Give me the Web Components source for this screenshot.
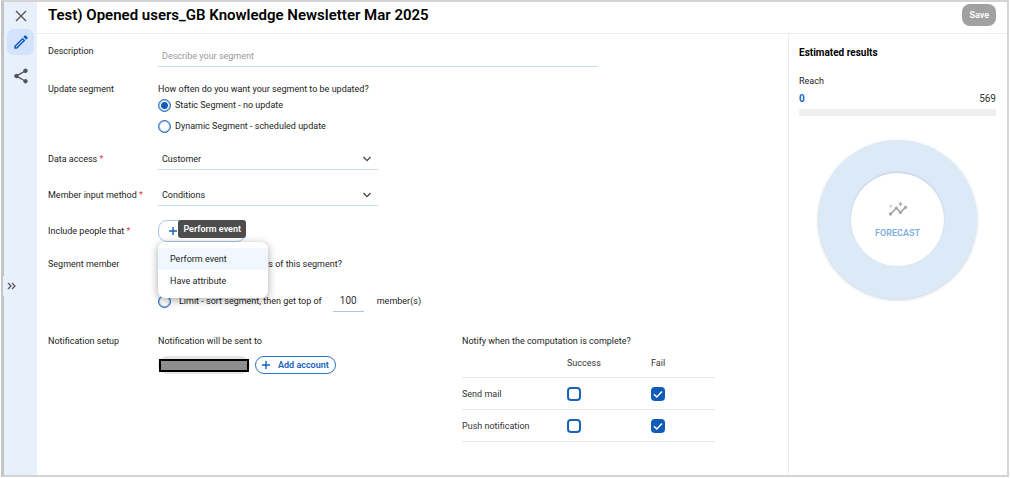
<!DOCTYPE html>
<html lang="en">
<head>
<meta charset="utf-8">
<meta name="viewport" content="width=device-width, initial-scale=1">
<title>Edit segment</title>
<style>
    html, body {
        margin: 0;
        background: #fff;
    }
    body {
        font-family: Roboto, "Liberation Sans", sans-serif;
        font-size: 9px;
        line-height: 16px;
        color: #1c1c1c;
    }
</style>
</head>
<body>
<segment-app></segment-app>

<script>
class SideRail extends HTMLElement {
    connectedCallback() {
        this.attachShadow({ mode: 'open' });
        this.shadowRoot.innerHTML = `
            <style>
                :host {
                    display: block;
                    position: relative;
                    background-color: #e8f0fb;
                    padding: 1px 3px;
                    color: #555;
                }

                button {
                    display: flex;
                    align-items: center;
                    justify-content: center;
                    width: 27px;
                    height: 26px;
                    padding: 0;
                    border: 0;
                    border-radius: 7px;
                    background: none;
                    color: inherit;
                    cursor: pointer;
                }

                nav {
                    display: flex;
                    flex-direction: column;
                    gap: 8px;
                }

                nav .active {
                    background-color: #d3e3fd;
                    color: #0f5cb8;
                }

                svg {
                    fill: currentColor;
                }

                /* handle sits on the edge of the rail */
                .expand {
                    position: absolute;
                    top: 58%;
                    left: -1px;
                    width: 16px;
                    height: 20px;
                    border-radius: 0;
                    background-color: #e8f0fb;
                }

                .expand svg, .close svg {
                    fill: none;
                    stroke: currentColor;
                }
            </style>
            <button class="close" aria-label="Close">
                <svg width="12" height="12" viewBox="0 0 12 12" stroke-width="1.4"><path d="M1 1l10 10M11 1L1 11"/></svg>
            </button>
            <nav>
                <button class="active" aria-label="Edit">
                    <svg width="18" height="18" viewBox="0 0 24 24"><path d="M14.06 9.02l.92.92L5.92 19H5v-.92l9.06-9.06M17.66 3c-.25 0-.51.1-.7.29l-1.83 1.83 3.75 3.75 1.83-1.83c.39-.39.39-1.02 0-1.41l-2.34-2.34c-.2-.2-.45-.29-.71-.29zm-3.6 3.19L3 17.25V21h3.75L17.81 9.94l-3.75-3.75z"/></svg>
                </button>
                <button aria-label="Share">
                    <svg width="18" height="18" viewBox="0 0 24 24"><path d="M18 16.08c-.76 0-1.44.3-1.96.77L8.91 12.7c.05-.23.09-.46.09-.7s-.04-.47-.09-.7l7.05-4.11c.54.5 1.25.81 2.04.81 1.66 0 3-1.34 3-3s-1.34-3-3-3-3 1.34-3 3c0 .24.04.47.09.7L8.04 9.81C7.5 9.31 6.79 9 6 9c-1.66 0-3 1.34-3 3s1.34 3 3 3c.79 0 1.5-.31 2.04-.81l7.12 4.16c-.05.21-.08.43-.08.65 0 1.61 1.31 2.92 2.92 2.92s2.92-1.31 2.92-2.92-1.31-2.92-2.92-2.92z"/></svg>
                </button>
            </nav>
            <button class="expand" aria-label="Expand">
                <svg width="9" height="8" viewBox="0 0 9 8" stroke-width="1.3"><path d="M1 1l3 3-3 3M5 1l3 3-3 3"/></svg>
            </button>
        `;
    }
}

class PageHeader extends HTMLElement {
    connectedCallback() {
        this.attachShadow({ mode: 'open' });
        this.shadowRoot.innerHTML = `
            <style>
                :host {
                    display: flex;
                    align-items: center;
                    justify-content: space-between;
                    padding: 2px 11px 7px;
                    border-bottom: 1px solid #ececec;
                }

                h1 {
                    margin: 0;
                    font-size: 15px;
                    line-height: 22px;
                    font-weight: 600;
                    color: #000;
                }

                button {
                    height: 22px;
                    padding: 0 7px;
                    border: 0;
                    border-radius: 8px;
                    background-color: #a1a1a1;
                    color: #fff;
                    font: inherit;
                    font-weight: 600;
                }
            </style>
            <h1><slot></slot></h1>
            <button disabled>Save</button>
        `;
    }
}

class FormRow extends HTMLElement {
    connectedCallback() {
        this.attachShadow({ mode: 'open' });
        this.shadowRoot.innerHTML = `
            <style>
                :host {
                    display: grid;
                    grid-template-columns: 110px minmax(0, 1fr);
                }

                :host([middle]) {
                    align-items: center;
                }

                .req {
                    display: none;
                    color: #e53e30;
                }

                :host([required]) .req {
                    display: inline;
                }
            </style>
            <div><slot name="label"></slot><span class="req"> *</span></div>
            <div><slot></slot></div>
        `;
    }
}

class SelectField extends HTMLElement {
    connectedCallback() {
        this.attachShadow({ mode: 'open' });
        this.shadowRoot.innerHTML = `
            <style>
                :host {
                    display: grid;
                    grid-template-columns: 1fr 16px;
                    align-items: center;
                    max-width: 220px;
                    border-bottom: 1px solid #c5dbef;
                }

                ::slotted(select) {
                    grid-area: 1 / 1 / 2 / 3;
                    height: 21px;
                    padding: 0 4px;
                    border: 0;
                    background: none;
                    appearance: none;
                    font: inherit;
                    color: inherit;
                }

                svg {
                    grid-area: 1 / 2;
                    fill: none;
                    stroke: #444;
                    pointer-events: none;
                }
            </style>
            <slot></slot>
            <svg width="10" height="8" viewBox="0 0 10 8" stroke-width="1.3"><path d="M1.5 2l3.5 3.6L8.5 2"/></svg>
        `;
    }
}

class PillButton extends HTMLElement {
    connectedCallback() {
        this.attachShadow({ mode: 'open' });
        this.shadowRoot.innerHTML = `
            <style>
                :host {
                    display: block;
                }

                button {
                    display: flex;
                    align-items: center;
                    gap: 8px;
                    box-sizing: border-box;
                    width: 100%;
                    height: 18px;
                    padding: 0 6px;
                    border: 1px solid #2f74c4;
                    border-radius: 9px;
                    background-color: #fff;
                    color: #1560bd;
                    font: inherit;
                    font-weight: 600;
                }

                :host([large]) button {
                    height: 22px;
                    padding: 0 10px;
                    border-color: #a9c8e6;
                }

                svg {
                    fill: none;
                    stroke: currentColor;
                }
            </style>
            <button aria-label="${this.getAttribute('label')}">
                <svg width="8" height="8" viewBox="0 0 8 8" stroke-width="1.4"><path d="M4 0v8M0 4h8"/></svg>
                <slot></slot>
            </button>
        `;
    }
}

class ConditionMenu extends HTMLElement {
    connectedCallback() {
        this.attachShadow({ mode: 'open' });
        this.shadowRoot.innerHTML = `
            <style>
                :host {
                    display: block;
                    position: relative;
                    width: 88px;
                }

                .tooltip {
                    position: absolute;
                    z-index: 3;
                    top: 0;
                    right: 0;
                    padding: 1px 5px;
                    border-radius: 3px;
                    background-color: #4d4d4d;
                    color: #fff;
                    font-weight: 600;
                    white-space: nowrap;
                }

                .menu {
                    position: absolute;
                    z-index: 2;
                    top: 100%;
                    left: 0;
                    width: 110px;
                    padding: 6px 0;
                    border-radius: 7px;
                    background-color: #fff;
                    box-shadow: 0 2px 8px rgba(0, 0, 0, 0.35);
                }

                .menu button {
                    display: block;
                    width: 100%;
                    height: 22px;
                    padding: 0 12px;
                    border: 0;
                    background: none;
                    color: inherit;
                    font: inherit;
                    text-align: left;
                }

                .menu .hover {
                    background-color: #f0f7fe;
                }
            </style>
            <pill-button large label="Add condition"></pill-button>
            <div class="tooltip" role="tooltip">Perform event</div>
            <div class="menu" role="menu">
                <button class="hover" role="menuitem">Perform event</button>
                <button role="menuitem">Have attribute</button>
            </div>
        `;
    }
}

class NotifyTable extends HTMLElement {
    connectedCallback() {
        this.attachShadow({ mode: 'open' });
        const rows = ['Send mail', 'Push notification'];
        this.shadowRoot.innerHTML = `
            <style>
                :host {
                    display: block;
                }

                table {
                    width: 100%;
                    table-layout: fixed;
                    border-collapse: collapse;
                    color: #333;
                }

                th {
                    height: 28px;
                    font-weight: 400;
                    text-align: left;
                }

                th, td {
                    padding: 0;
                    border-bottom: 1px solid #e6e6e6;
                }

                tbody th {
                    height: 31px;
                }

                .name {
                    width: 105px;
                }

                .success {
                    width: 84px;
                }

                input {
                    display: block;
                    width: 14px;
                    height: 14px;
                    margin: 0;
                    box-sizing: border-box;
                    appearance: none;
                    border: 2px solid #1a62b8;
                    border-radius: 4px;
                    background-color: #fff;
                }

                input:checked {
                    border: 0;
                    background: #0f5cb8 url("data:image/svg+xml,%3Csvg xmlns='http://www.w3.org/2000/svg' viewBox='0 0 14 14'%3E%3Cpath d='M3 7.2l2.8 2.8 5.2-5.400' fill='none' stroke='white' stroke-width='1.500'/%3E%3C/svg%3E") center / 14px 14px no-repeat;
                }
            </style>
            <table>
                <thead>
                    <tr><th class="name"></th><th class="success">Success</th><th>Fail</th></tr>
                </thead>
                <tbody>
                    ${rows.map(name => `
                        <tr>
                            <th scope="row">${name}</th>
                            <td><input type="checkbox" aria-label="${name} on success"></td>
                            <td><input type="checkbox" aria-label="${name} on fail" checked></td>
                        </tr>
                    `).join('')}
                </tbody>
            </table>
        `;
    }
}

class SegmentForm extends HTMLElement {
    connectedCallback() {
        this.attachShadow({ mode: 'open' });
        this.shadowRoot.innerHTML = `
            <style>
                :host {
                    display: flex;
                    flex-direction: column;
                    gap: 14px;
                    padding: 9px 11px;
                }

                .description {
                    display: block;
                    box-sizing: border-box;
                    width: 100%;
                    max-width: 440px;
                    height: 24px;
                    padding: 3px 4px 0;
                    border: 0;
                    border-bottom: 1px solid #c5dbef;
                    font: inherit;
                }

                .description::placeholder {
                    color: #999;
                }

                .options {
                    display: flex;
                    flex-direction: column;
                    gap: 5px;
                }

                .option {
                    display: flex;
                    align-items: center;
                }

                .option label {
                    display: flex;
                    align-items: center;
                    gap: 4px;
                }

                input[type="radio"] {
                    width: 13px;
                    height: 13px;
                    box-sizing: border-box;
                    margin: 0;
                    appearance: none;
                    border: 1px solid #1a62b8;
                    border-radius: 50%;
                    background-color: #fff;
                    box-shadow: inset 0 0 0 1px rgba(26, 98, 184, 0.4);
                }

                input[type="radio"]:checked {
                    background: radial-gradient(circle, #0f5cb8 3px, #fff 4px);
                }

                .limits {
                    gap: 2px;
                    margin-bottom: 7px;
                }

                .limits .option {
                    min-height: 16px;
                }

                .limits label {
                    gap: 8px;
                }

                .count {
                    width: 31px;
                    height: 22px;
                    box-sizing: border-box;
                    margin: 0 13px 0 11px;
                    padding: 0;
                    border: 0;
                    border-bottom: 1px solid #a9c8e6;
                    font: inherit;
                    font-size: 10px;
                    color: #333;
                    text-align: center;
                }

                .notify {
                    display: grid;
                    grid-template-columns: minmax(0, 304px) 253px;
                }

                .accounts {
                    display: flex;
                    align-items: center;
                    gap: 5px;
                    margin-top: 7px;
                }

                .account {
                    display: flex;
                    align-items: center;
                    width: 92px;
                    height: 18px;
                    border-radius: 9px;
                    background-color: #e6e6e6;
                }

                .account span {
                    flex: 1;
                    height: 9px;
                    margin: 0 1px;
                    border: 2px solid #000;
                    background-color: #8e8e8e;
                }
            </style>
            <form-row>
                <label slot="label" for="description">Description</label>
                <input class="description" id="description" type="text" placeholder="Describe your segment">
            </form-row>
            <form-row>
                <span slot="label">Update segment</span>
                <div id="often">How often do you want your segment to be updated?</div>
                <div class="options" role="radiogroup" aria-labelledby="often">
                    <div class="option"><label><input type="radio" name="update" checked>Static Segment - no update</label></div>
                    <div class="option"><label><input type="radio" name="update">Dynamic Segment - scheduled update</label></div>
                </div>
            </form-row>
            <form-row middle required>
                <label slot="label" for="access">Data access</label>
                <select-field><select id="access"><option>Customer</option></select></select-field>
            </form-row>
            <form-row middle required>
                <label slot="label" for="method">Member input method</label>
                <select-field><select id="method"><option>Conditions</option></select></select-field>
            </form-row>
            <form-row middle required>
                <span slot="label">Include people that</span>
                <condition-menu></condition-menu>
            </form-row>
            <form-row>
                <span slot="label">Segment member</span>
                <div id="members">Do you want to get members of this segment?</div>
                <div class="options limits" role="radiogroup" aria-labelledby="members">
                    <div class="option"><input type="radio" name="limit" aria-label="No limit" checked></div>
                    <div class="option">
                        <label><input type="radio" name="limit">Limit - sort segment, then get top of</label>
                        <input class="count" id="count" type="text" value="100">
                        <label for="count">member(s)</label>
                    </div>
                </div>
            </form-row>
            <form-row>
                <span slot="label">Notification setup</span>
                <div class="notify">
                    <div>
                        <div>Notification will be sent to</div>
                        <div class="accounts">
                            <div class="account"><span></span></div>
                            <pill-button label="Add account">Add account</pill-button>
                        </div>
                    </div>
                    <div>
                        <div>Notify when the computation is complete?</div>
                        <notify-table></notify-table>
                    </div>
                </div>
            </form-row>
        `;
    }
}

class EstimatedResults extends HTMLElement {
    connectedCallback() {
        this.attachShadow({ mode: 'open' });
        this.shadowRoot.innerHTML = `
            <style>
                :host {
                    display: block;
                    padding: 11px 11px 10px 10px;
                    border-left: 1px solid #ececec;
                }

                h2 {
                    margin: 0 0 12px;
                    font-size: 10px;
                    line-height: 16px;
                    font-weight: 700;
                    color: #000;
                }

                .values {
                    display: flex;
                    justify-content: space-between;
                    margin-top: 2px;
                    font-size: 10px;
                    color: #333;
                }

                .values b {
                    color: #1565c0;
                }

                .bar {
                    height: 7px;
                    margin-top: 2px;
                    border-radius: 2px;
                    background-color: #efefef;
                }

                .donut {
                    box-sizing: border-box;
                    width: 159px;
                    height: 159px;
                    margin: 24px auto 0;
                    padding: 33px;
                    border-radius: 50%;
                    background-color: #dce9f7;
                    box-shadow: 0 1px 3px rgba(80, 110, 140, 0.3);
                }

                .donut button {
                    display: flex;
                    flex-direction: column;
                    align-items: center;
                    justify-content: center;
                    gap: 6px;
                    width: 100%;
                    height: 100%;
                    padding: 0;
                    border: 0;
                    border-radius: 50%;
                    background-color: #fff;
                    box-shadow: 0 -1px 2px rgba(80, 110, 140, 0.2);
                    color: #7eaedd;
                    font: inherit;
                    font-weight: 600;
                }

                svg {
                    fill: #a6a6a6;
                }
            </style>
            <h2>Estimated results</h2>
            <div>Reach</div>
            <div class="values"><b>0</b><span>569</span></div>
            <div class="bar"></div>
            <div class="donut">
                <button>
                    <svg width="20" height="20" viewBox="0 0 24 24"><path d="M21 8c-1.45 0-2.26 1.44-1.93 2.51l-3.55 3.56c-.3-.09-.74-.09-1.04 0l-2.55-2.55C12.27 10.45 11.46 9 10 9c-1.45 0-2.27 1.44-1.93 2.52l-4.56 4.55C2.44 15.74 1 16.55 1 18c0 1.1.9 2 2 2 1.45 0 2.26-1.44 1.93-2.51l4.55-4.56c.3.09.74.09 1.04 0l2.55 2.55C12.73 16.55 13.54 18 15 18c1.45 0 2.27-1.44 1.93-2.52l3.56-3.55C21.56 12.26 23 11.45 23 10c0-1.1-.9-2-2-2zM15 9l.94-2.07L18 6l-2.06-.93L15 3l-.92 2.07L12 6l2.08.93zM3.5 11L4 9l2-.5L4 8l-.5-2L3 8l-2 .5L3 9z"/></svg>
                    FORECAST
                </button>
            </div>
        `;
    }
}

class SegmentApp extends HTMLElement {
    connectedCallback() {
        this.attachShadow({ mode: 'open' });
        this.shadowRoot.innerHTML = `
            <style>
                :host {
                    display: grid;
                    grid-template-columns: 33px minmax(0, 1fr);
                    box-sizing: border-box;
                    min-height: calc(100vh - 1px);
                    margin: 0 1px 1px;
                    border: 2px solid #d4d4d4;
                    border-left: 3px solid #c4c4c4;
                }

                main {
                    display: flex;
                    flex-direction: column;
                }

                .content {
                    flex: 1;
                    display: grid;
                    grid-template-columns: minmax(0, 1fr) 219px;
                }
            </style>
            <side-rail></side-rail>
            <main>
                <page-header>Test) Opened users_GB Knowledge Newsletter Mar 2025</page-header>
                <div class="content">
                    <segment-form></segment-form>
                    <estimated-results></estimated-results>
                </div>
            </main>
        `;
    }
}

customElements.define('side-rail', SideRail);
customElements.define('page-header', PageHeader);
customElements.define('form-row', FormRow);
customElements.define('select-field', SelectField);
customElements.define('pill-button', PillButton);
customElements.define('condition-menu', ConditionMenu);
customElements.define('notify-table', NotifyTable);
customElements.define('segment-form', SegmentForm);
customElements.define('estimated-results', EstimatedResults);
customElements.define('segment-app', SegmentApp);
</script>
</body>
</html>
